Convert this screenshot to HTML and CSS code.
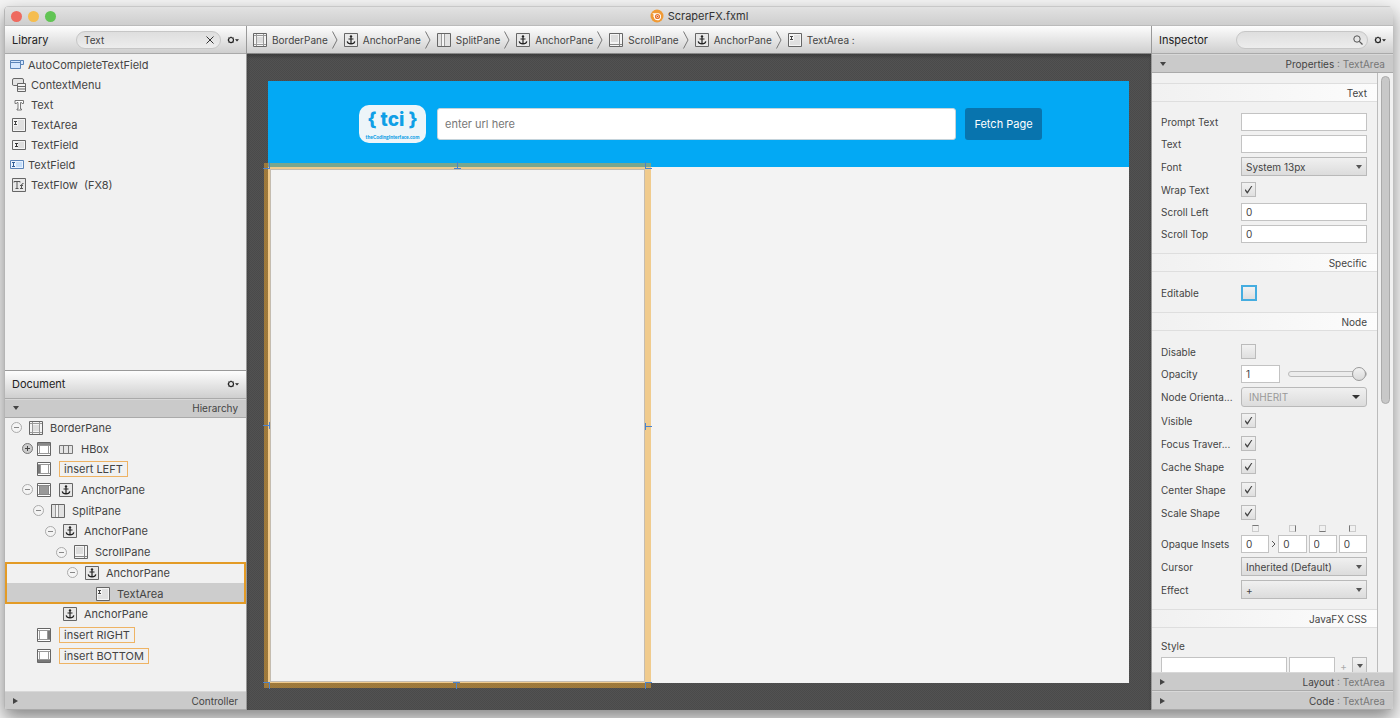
FILE: index.html
```
<!DOCTYPE html>
<html lang="en">

<head>
    <meta charset="UTF-8">
    <meta name="viewport" content="width=device-width, initial-scale=1.0">
    <title>ScraperFX.fxml</title>
    <link rel="stylesheet" href="styles.css">
</head>

<body>
    <!-- Shared icons -->
    <svg class="sprite" aria-hidden="true">
        <symbol id="i-border" viewBox="0 0 14 14">
            <path fill="#f4f4f4" stroke="#666" d="M.5.5h13v13H.5z" />
            <path fill="#ddd" d="M4 4h6v6H4z" />
            <path fill="none" stroke="#999" d="M1 2.5h12M1 11.5h12M3.5 1v12M10.5 1v12" />
        </symbol>
        <symbol id="i-top" viewBox="0 0 14 14">
            <path fill="#fff" stroke="#666" d="M.5.5h13v13H.5z" />
            <path fill="#888" d="M1 1h12v2H1z" />
            <path fill="none" stroke="#999" d="M1 3.5h12M1 11.5h12M2.5 4v7M11.5 4v7" />
        </symbol>
        <symbol id="i-left" viewBox="0 0 14 14">
            <path fill="#fff" stroke="#666" d="M.5.5h13v13H.5z" />
            <path fill="#777" d="M1 3h2v8H1z" />
            <path fill="none" stroke="#999" d="M1 2.5h12M1 11.5h12M3.5 3v8M11.5 3v8" />
        </symbol>
        <symbol id="i-right" viewBox="0 0 14 14">
            <path fill="#fff" stroke="#666" d="M.5.5h13v13H.5z" />
            <path fill="#777" d="M11 3h2v8h-2z" />
            <path fill="none" stroke="#999" d="M1 2.5h12M1 11.5h12M2.5 3v8M10.5 3v8" />
        </symbol>
        <symbol id="i-bottom" viewBox="0 0 14 14">
            <path fill="#fff" stroke="#666" d="M.5.5h13v13H.5z" />
            <path fill="#777" d="M1 11h12v2H1z" />
            <path fill="none" stroke="#999" d="M1 2.5h12M1 10.5h12M2.5 3v8M11.5 3v8" />
        </symbol>
        <symbol id="i-center" viewBox="0 0 14 14">
            <path fill="#fff" stroke="#666" d="M.5.5h13v13H.5z" />
            <path fill="#999" d="M3 3h8v8H3z" />
            <path fill="none" stroke="#888" d="M1 2.5h12M1 11.5h12M2.5 3v8M11.5 3v8" />
        </symbol>
        <symbol id="i-anchor" viewBox="0 0 14 14">
            <path fill="#e8e8e8" stroke="#666" d="M.5.5h13v13H.5z" />
            <path fill="none" stroke="#222" stroke-width="1.2" d="M7 4.500V11M4.500 6h5M3.200 8.300c.3 1.800 1.800 2.500 3.800 2.500s3.500-.7 3.800-2.500" />
            <circle cx="7" cy="3.500" r="1.200" fill="#222" />
        </symbol>
        <symbol id="i-split" viewBox="0 0 14 14">
            <path fill="#e2e2e2" stroke="#666" d="M.5.5h13v13H.5z" />
            <path fill="#f6f6f6" d="M5 1h3v12H5z" />
            <path fill="none" stroke="#999" d="M4.500 1v12M7.500 1v12" />
        </symbol>
        <symbol id="i-scroll" viewBox="0 0 14 14">
            <path fill="#f4f4f4" stroke="#666" d="M.5.5h13v13H.5z" />
            <path fill="#ddd" d="M2 2h7v7H2z" />
            <path fill="none" stroke="#888" d="M10.500 1v12M1 11.500h12" />
        </symbol>
        <symbol id="i-area" viewBox="0 0 14 14">
            <path fill="#f4f4f4" stroke="#666" d="M.5.5h13v13H.5z" />
            <path fill="#e0e0e0" d="M6 2h6v10H2V8h4z" />
            <path fill="none" stroke="#444" d="M2 3.500h3M3.500 3v4M2 6.500h3" />
        </symbol>
        <symbol id="i-field" viewBox="0 0 14 14">
            <path fill="#f4f4f4" stroke="#666" d="M.5 2.500h13v9H.5z" />
            <path fill="#ddd" d="M6 4h6v6H6z" />
            <path fill="none" stroke="#333" d="M3 5.500h3M4.500 5v4M3 8.500h3" />
        </symbol>
        <symbol id="i-field-blue" viewBox="0 0 14 14">
            <path fill="#eaf3ff" stroke="#5b84b8" d="M.5 2.500h13v8H.5z" />
            <path fill="#c5defa" d="M6 4h6v5H6z" />
            <path fill="none" stroke="#2f5e98" d="M2 4.500h3M3.500 4v5M2 8.500h3" />
        </symbol>
        <symbol id="i-custom" viewBox="0 0 14 14">
            <path fill="#d5e7ff" stroke="#5b84b8" d="M10.500 2.500h3v4h-3M.5 2.500h10v8H.5zM.5 4.500h10" />
        </symbol>
        <symbol id="i-hbox" viewBox="0 0 14 14">
            <path fill="#e4e4e4" stroke="#777" d="M.5 3.500h13v8H.5zM4.500 4v7M9.500 4v7" />
        </symbol>
        <symbol id="i-menu" viewBox="0 0 14 14">
            <path fill="#e4e4e4" stroke="#666" d="M2 .5h8q1.500 0 1.500 1.500v5.500h-10Q.5 7.500.5 6V2Q.5.5 2 .5z" />
            <path fill="#f4f4f4" stroke="#666" d="M5.500 5.500h8v8h-8zM5.500 8.500h8M5.500 11h8" />
        </symbol>
        <symbol id="i-text" viewBox="0 0 14 14">
            <path fill="#fff" stroke="#777" d="M3 2.500h8.500v3h-1.500l-.5-1h-1v6.500h1v1H5v-1h1V4.500H5l-.5 1H3z" />
        </symbol>
        <symbol id="i-flow" viewBox="0 0 14 14">
            <path fill="#e8e8e8" stroke="#666" d="M.5.5h13v13H.5z" />
            <path fill="none" stroke="#555" d="M2 4.500V3.500h6v1M5 4v7M3.500 10.500h3M9.500 11V7q0-1.500 2-1.500M8 7.500h3M8 10.500h3" />
        </symbol>
        <symbol id="i-minus" viewBox="0 0 11 11">
            <circle cx="5.500" cy="5.500" r="5" fill="#f4f4f4" stroke="#aaa" />
            <path stroke="#888" d="M3 5.500h5" />
        </symbol>
        <symbol id="i-plus" viewBox="0 0 11 11">
            <circle cx="5.500" cy="5.500" r="5" fill="#ccc" stroke="#777" />
            <path stroke="#444" d="M3 5.500h5M5.500 3v5" />
        </symbol>
        <symbol id="i-gear" viewBox="0 0 12 10">
            <circle cx="4" cy="5" r="2.500" fill="none" stroke="#222" stroke-width="1.200" />
            <path fill="none" stroke="#222" stroke-width=".7" d="M4 1.500v1M4 7.500v1M.5 5h1M1.500 2.500l.8.8M1.500 7.500l.8-.8M6.500 2.500l-.8.8M6.500 7.500l-.8-.8" />
            <path fill="#222" d="M8 4.200h4L10 6.600z" />
        </symbol>
        <symbol id="i-chevron" viewBox="0 0 6 18">
            <path fill="none" stroke="#777" d="M.5.5L5 9 .5 17.500" />
        </symbol>
        <symbol id="i-tee" viewBox="0 0 8 8">
            <path fill="none" stroke="#4a82cc" d="M4.500 0v6M1 6.500h7" />
        </symbol>
        <symbol id="i-corner" viewBox="0 0 8 8">
            <path fill="none" stroke="#4a82cc" d="M0 6.500h7M6.500 0v7" />
        </symbol>
    </svg>

    <div class="window">
        <header class="titlebar">
            <div class="lights">
                <button class="light red" aria-label="Close"></button>
                <button class="light yellow" aria-label="Minimize"></button>
                <button class="light green" aria-label="Zoom"></button>
            </div>
            <svg class="app-icon" viewBox="0 0 14 14">
                <circle cx="7" cy="7" r="6.500" fill="#f09a35" />
                <path fill="#fff" d="M2.200 4.200l6.300.1a3.600 3.600 0 1 1-4.600 4L2.800 6.400l1.600.1z" />
                <circle cx="7.500" cy="7.500" r="2.600" fill="#e8762c" />
                <circle cx="7.500" cy="7.500" r="1.200" fill="#fff" />
                <circle cx="7.500" cy="7.500" r=".8" fill="#d24a1f" />
            </svg>
            <h1>ScraperFX.fxml</h1>
        </header>

        <div class="workspace">
            <!-- Library and document -->
            <aside class="side">
                <section class="library">
                    <div class="toolbar">
                        <h2>Library</h2>
                        <div class="search">
                            <input type="text" value="Text" aria-label="Search library">
                            <button aria-label="Clear">
                                <svg viewBox="0 0 10 10"><path stroke="#333" d="M1.500 1.500l7 7M8.500 1.500l-7 7" /></svg>
                            </button>
                        </div>
                        <button class="gear" aria-label="Library options"><svg><use href="#i-gear" /></svg></button>
                    </div>
                    <ul class="items">
                        <li class="custom"><svg class="icon"><use href="#i-custom" /></svg>AutoCompleteTextField</li>
                        <li><svg class="icon"><use href="#i-menu" /></svg>ContextMenu</li>
                        <li><svg class="icon"><use href="#i-text" /></svg>Text</li>
                        <li><svg class="icon"><use href="#i-area" /></svg>TextArea</li>
                        <li><svg class="icon"><use href="#i-field" /></svg>TextField</li>
                        <li class="custom"><svg class="icon"><use href="#i-field-blue" /></svg>TextField</li>
                        <li><svg class="icon"><use href="#i-flow" /></svg>TextFlow &nbsp;(FX8)</li>
                    </ul>
                </section>

                <section class="document">
                    <div class="toolbar">
                        <h2>Document</h2>
                        <button class="gear" aria-label="Document options"><svg><use href="#i-gear" /></svg></button>
                    </div>
                    <button class="bar open"><span>Hierarchy</span></button>
                    <ul class="tree">
                        <li class="node l0"><svg class="toggle"><use href="#i-minus" /></svg><svg class="icon"><use href="#i-border" /></svg>BorderPane</li>
                        <li class="node l1 slot"><svg class="toggle"><use href="#i-plus" /></svg><svg class="icon"><use href="#i-top" /></svg><svg class="icon"><use href="#i-hbox" /></svg>HBox</li>
                        <li class="node l1 slot"><span class="toggle"></span><svg class="icon"><use href="#i-left" /></svg><span class="insert">insert LEFT</span></li>
                        <li class="node l1 slot"><svg class="toggle"><use href="#i-minus" /></svg><svg class="icon"><use href="#i-center" /></svg><svg class="icon"><use href="#i-anchor" /></svg>AnchorPane</li>
                        <li class="node l2"><svg class="toggle"><use href="#i-minus" /></svg><svg class="icon"><use href="#i-split" /></svg>SplitPane</li>
                        <li class="node l3"><svg class="toggle"><use href="#i-minus" /></svg><svg class="icon"><use href="#i-anchor" /></svg>AnchorPane</li>
                        <li class="node l4"><svg class="toggle"><use href="#i-minus" /></svg><svg class="icon"><use href="#i-scroll" /></svg>ScrollPane</li>
                        <li class="group">
                            <ul>
                                <li class="node l5"><svg class="toggle"><use href="#i-minus" /></svg><svg class="icon"><use href="#i-anchor" /></svg>AnchorPane</li>
                                <li class="node l6 selected"><span class="toggle"></span><svg class="icon"><use href="#i-area" /></svg>TextArea</li>
                            </ul>
                        </li>
                        <li class="node l3"><span class="toggle"></span><svg class="icon"><use href="#i-anchor" /></svg>AnchorPane</li>
                        <li class="node l1 slot"><span class="toggle"></span><svg class="icon"><use href="#i-right" /></svg><span class="insert">insert RIGHT</span></li>
                        <li class="node l1 slot"><span class="toggle"></span><svg class="icon"><use href="#i-bottom" /></svg><span class="insert">insert BOTTOM</span></li>
                    </ul>
                    <button class="bar"><span>Controller</span></button>
                </section>
            </aside>

            <!-- Canvas -->
            <main class="content">
                <nav class="toolbar crumbs">
                    <a href="#"><svg class="icon"><use href="#i-border" /></svg>BorderPane</a>
                    <svg class="chevron"><use href="#i-chevron" /></svg>
                    <a href="#"><svg class="icon"><use href="#i-anchor" /></svg>AnchorPane</a>
                    <svg class="chevron"><use href="#i-chevron" /></svg>
                    <a href="#"><svg class="icon"><use href="#i-split" /></svg>SplitPane</a>
                    <svg class="chevron"><use href="#i-chevron" /></svg>
                    <a href="#"><svg class="icon"><use href="#i-anchor" /></svg>AnchorPane</a>
                    <svg class="chevron"><use href="#i-chevron" /></svg>
                    <a href="#"><svg class="icon"><use href="#i-scroll" /></svg>ScrollPane</a>
                    <svg class="chevron"><use href="#i-chevron" /></svg>
                    <a href="#"><svg class="icon"><use href="#i-anchor" /></svg>AnchorPane</a>
                    <svg class="chevron"><use href="#i-chevron" /></svg>
                    <a href="#"><svg class="icon"><use href="#i-area" /></svg>TextArea :</a>
                </nav>
                <div class="canvas">
                    <div class="stage">
                        <div class="hbox">
                            <div class="logo">
                                <span class="logo-name">{ tci }</span>
                                <span class="logo-url">theCodingInterface.com</span>
                            </div>
                            <input class="url" type="text" placeholder="enter url here" aria-label="URL">
                            <button class="fetch">Fetch Page</button>
                        </div>
                        <div class="split">
                            <div class="pane">
                                <textarea aria-label="Output" readonly></textarea>
                                <div class="selection">
                                    <svg class="mark nw"><use href="#i-corner" /></svg>
                                    <svg class="mark n"><use href="#i-tee" /></svg>
                                    <svg class="mark ne"><use href="#i-corner" /></svg>
                                    <svg class="mark e"><use href="#i-tee" /></svg>
                                    <svg class="mark se"><use href="#i-corner" /></svg>
                                    <svg class="mark s"><use href="#i-tee" /></svg>
                                    <svg class="mark sw"><use href="#i-corner" /></svg>
                                    <svg class="mark w"><use href="#i-tee" /></svg>
                                </div>
                            </div>
                        </div>
                    </div>
                </div>
            </main>

            <!-- Inspector -->
            <aside class="side inspector">
                <div class="toolbar">
                    <h2>Inspector</h2>
                    <div class="search">
                        <input type="text" aria-label="Search inspector">
                        <svg viewBox="0 0 10 10"><circle cx="4" cy="4" r="3.200" fill="none" stroke="#555" /><path stroke="#555" stroke-width="1.200" d="M6.300 6.300L9.500 9.500" /></svg>
                    </div>
                    <button class="gear" aria-label="Inspector options"><svg><use href="#i-gear" /></svg></button>
                </div>
                <button class="bar open"><span>Properties <em>: TextArea</em></span></button>
                <div class="scroller">
                    <form class="properties">
                        <h3>Text</h3>
                        <div class="fields">
                            <div class="row"><label for="prompt">Prompt Text</label><input id="prompt" type="text"></div>
                            <div class="row"><label for="text">Text</label><input id="text" type="text"></div>
                            <div class="row combo"><label for="font">Font</label><div class="select"><select id="font"><option>System 13px</option></select></div></div>
                            <div class="row check"><label for="wrap">Wrap Text</label><input id="wrap" type="checkbox" checked></div>
                            <div class="row"><label for="left">Scroll Left</label><input id="left" type="text" value="0"></div>
                            <div class="row"><label for="top">Scroll Top</label><input id="top" type="text" value="0"></div>
                        </div>

                        <h3>Specific</h3>
                        <div class="fields">
                            <div class="row check"><label for="editable">Editable</label><input id="editable" class="focused" type="checkbox"></div>
                        </div>

                        <h3>Node</h3>
                        <div class="fields">
                            <div class="row check"><label for="disable">Disable</label><input id="disable" type="checkbox"></div>
                            <div class="row"><label for="opacity">Opacity</label><input id="opacity" class="short" type="text" value="1"><input type="range" min="0" max="1" step="0.1" value="1" aria-label="Opacity slider"></div>
                            <div class="row choice"><label for="orientation">Node Orienta...</label><div class="select"><select id="orientation"><option>INHERIT</option></select></div></div>
                            <div class="row check"><label for="visible">Visible</label><input id="visible" type="checkbox" checked></div>
                            <div class="row check"><label for="focus">Focus Traver...</label><input id="focus" type="checkbox" checked></div>
                            <div class="row check"><label for="cache">Cache Shape</label><input id="cache" type="checkbox" checked></div>
                            <div class="row check"><label for="center">Center Shape</label><input id="center" type="checkbox" checked></div>
                            <div class="row check"><label for="scale">Scale Shape</label><input id="scale" type="checkbox" checked></div>
                            <div class="row insets">
                                <label for="inset-top">Opaque Insets</label>
                                <div class="inset"><i class="edge top"></i><input id="inset-top" type="text" value="0"></div>
                                <svg class="link" viewBox="0 0 5 8"><path fill="none" stroke="#555" d="M1 1l3 3-3 3" /></svg>
                                <div class="inset"><i class="edge right"></i><input type="text" value="0" aria-label="Right inset"></div>
                                <div class="inset"><i class="edge bottom"></i><input type="text" value="0" aria-label="Bottom inset"></div>
                                <div class="inset"><i class="edge left"></i><input type="text" value="0" aria-label="Left inset"></div>
                            </div>
                            <div class="row combo"><label for="cursor">Cursor</label><div class="select"><select id="cursor"><option>Inherited (Default)</option></select></div></div>
                            <div class="row combo"><label for="effect">Effect</label><div class="select"><select id="effect"><option>+</option></select></div></div>
                        </div>

                        <h3>JavaFX CSS</h3>
                        <div class="fields">
                            <label class="style-label" for="style">Style</label>
                            <div class="style-row">
                                <input id="style" type="text">
                                <input class="value" type="text" aria-label="Style value">
                                <button type="button" class="add" disabled>+</button>
                                <button type="button" class="more" aria-label="More"></button>
                            </div>
                        </div>
                    </form>
                    <div class="scrollbar"><div class="thumb"></div></div>
                </div>
                <button class="bar"><span>Layout <em>: TextArea</em></span></button>
                <button class="bar"><span>Code <em>: TextArea</em></span></button>
            </aside>
        </div>
    </div>
</body>

</html>
```
FILE: styles.css
```
* {
    box-sizing: border-box;
}

body {
    margin: 0;
    height: 100vh;
    padding: 6px 7px 8px 4px;
    background: #f4f4f4;
    font-family: Inter, "Liberation Sans", sans-serif;
    font-size: 11px;
    color: #444;
    overflow: hidden;
}

h1, h2, h3, ul {
    margin: 0;
    padding: 0;
    font-weight: 400;
    list-style: none;
}

button, input, select, textarea {
    margin: 0;
    font: inherit;
    color: inherit;
    border-radius: 0;
    outline: none;
}

button {
    padding: 0;
    border: 0;
    background: none;
}

.sprite {
    position: absolute;
    width: 0;
    height: 0;
}

.icon {
    width: 14px;
    height: 14px;
    flex: none;
}

/* Window */
.window {
    height: 100%;
    display: flex;
    flex-direction: column;
    border-left: 1px solid #b5b5b5;
    border-radius: 5px 5px 4px 4px;
    overflow: hidden;
    background: #f1f1f1;
    box-shadow: 0 8px 18px rgba(0, 0, 0, 0.45);
}

.titlebar {
    flex: none;
    height: 20px;
    display: flex;
    align-items: center;
    justify-content: center;
    gap: 4px;
    position: relative;
    background: linear-gradient(#e2e2e2, #cecece);
    border-top: 1px solid #c8c8c8;
    border-bottom: 1px solid #bbb;
}

.titlebar h1 {
    font-size: 11px;
    color: #333;
}

.app-icon {
    width: 14px;
    height: 14px;
}

.lights {
    position: absolute;
    left: 6px;
    display: flex;
    gap: 6px;
}

.light {
    width: 11px;
    height: 11px;
    border-radius: 50%;
}

.light.red {
    background: #ee6a5f;
}

.light.yellow {
    background: #f5bd4f;
}

.light.green {
    background: #61c454;
}

.workspace {
    flex: 1;
    min-height: 0;
    display: flex;
}

.side {
    flex: none;
    width: 241px;
    display: flex;
    flex-direction: column;
    min-height: 0;
}

.inspector {
    width: 242px;
    border-left: 1px solid #999;
}

.toolbar {
    flex: none;
    height: 28px;
    display: flex;
    align-items: center;
    padding: 0 7px;
    background: linear-gradient(#fdfdfd, #cfcfcf);
    border-bottom: 1px solid #aaa;
}

.toolbar h2 {
    flex: 1;
    font-size: 11px;
    color: #222;
}

.search {
    display: flex;
    align-items: center;
    width: 145px;
    height: 18px;
    padding: 0 5px 0 7px;
    border: 1px solid #c6c6c6;
    border-radius: 9px;
    background: linear-gradient(#dedede, #ededed);
}

.inspector .search {
    width: 132px;
    padding-right: 4px;
}

.search input {
    flex: 1;
    min-width: 0;
    padding: 0;
    border: 0;
    background: none;
    font-size: 10px;
}

.search svg {
    display: block;
    width: 10px;
    height: 10px;
}

.gear {
    margin-left: 6px;
}

.gear svg {
    display: block;
    width: 12px;
    height: 10px;
}

/* Accordion titles */
.bar {
    flex: none;
    height: 19px;
    display: flex;
    align-items: center;
    justify-content: space-between;
    padding: 0 8px;
    background: #cacaca;
    border-top: 1px solid #d8d8d8;
    border-bottom: 1px solid #aaa;
    font-size: 10px;
}

.bar::before {
    content: "";
    border: 3px solid transparent;
    border-left: 5px solid #444;
    border-right: 0;
}

.bar.open::before {
    border: 3px solid transparent;
    border-top: 4px solid #444;
    border-bottom: 0;
}

.bar em {
    font-style: normal;
    color: #777;
}

/* Library */
.library, .document {
    flex: 344 1 0;
    display: flex;
    flex-direction: column;
    min-height: 0;
}

.document {
    flex-grow: 340;
    border-top: 1px solid #999;
}

.items {
    padding: 1px 7px;
}

.items li {
    display: flex;
    align-items: center;
    gap: 5px;
    height: 20px;
}

.items .custom {
    margin-left: -2px;
    gap: 4px;
}

/* Hierarchy tree */
.tree {
    flex: 1;
    min-height: 0;
    display: flex;
    flex-direction: column;
    padding-bottom: 25px;
}

.node {
    flex: 1;
    display: flex;
    align-items: center;
    gap: 7px;
}

.toggle {
    flex: none;
    width: 11px;
    height: 11px;
}

.slot {
    gap: 8px;
}

.slot .toggle {
    margin-right: -4px;
}

.l0 {
    padding-left: 6px;
}

.l1 {
    padding-left: 17px;
}

.l2 {
    padding-left: 28px;
}

.l3 {
    padding-left: 40px;
}

.l4 {
    padding-left: 51px;
}

.l5 {
    padding-left: 62px;
}

.l6 {
    padding-left: 73px;
}

.group {
    flex: 2;
    outline: 2px solid #e39b26;
    outline-offset: -2px;
}

.group ul {
    height: 100%;
    display: flex;
    flex-direction: column;
}

.selected {
    background: #cdcdcd;
}

.insert {
    padding: 0 4px;
    border: 1px solid #eeb364;
    line-height: 14px;
}

/* Content area */
.content {
    flex: 1;
    min-width: 0;
    display: flex;
    flex-direction: column;
    border-left: 1px solid #999;
}

.crumbs {
    gap: 6px;
    padding: 0 6px;
    font-size: 10px;
    border-color: #888;
}

.crumbs a {
    display: flex;
    align-items: center;
    gap: 5px;
    color: inherit;
    text-decoration: none;
    white-space: nowrap;
}

.chevron {
    width: 6px;
    height: 18px;
    margin-left: -2px;
}

.canvas {
    flex: 1;
    min-height: 0;
    display: flex;
    padding: 27px 22px 27px 21px;
    background: repeating-conic-gradient(#4a4a4a 0 25%, #525252 0 50%) 0 0 / 2px 2px;
    box-shadow: inset 0 3px 3px rgba(0, 0, 0, 0.2);
}

.stage {
    flex: 1;
    min-width: 0;
    display: flex;
    flex-direction: column;
    background: #f3f3f3;
}

.hbox {
    flex: none;
    height: 86px;
    display: flex;
    align-items: center;
    padding: 0 87px 0 91px;
    background: #03a9f4;
}

.logo {
    flex: none;
    display: flex;
    flex-direction: column;
    align-items: center;
    width: 67px;
    height: 38px;
    margin-right: 11px;
    border-radius: 10px;
    background: #edf5f9;
    color: #0f9fe6;
    font-weight: 800;
}

.logo-name {
    font-size: 19px;
    line-height: 30px;
}

.logo-url {
    font-family: Lato, Inter, sans-serif;
    font-size: 5px;
    font-weight: 900;
    line-height: 5px;
}

.url {
    flex: 1;
    min-width: 0;
    height: 32px;
    padding: 0 7px;
    border: 1px solid #c5d3da;
    border-radius: 3px;
    background: #fff;
}

.url::placeholder {
    color: #777;
}

.fetch {
    flex: none;
    width: 77px;
    height: 32px;
    margin-left: 9px;
    border-radius: 3px;
    background: #0874ae;
    color: #fff;
}

.split {
    flex: 1;
    min-height: 0;
    display: flex;
}

.pane {
    position: relative;
    width: 44%;
}

.pane textarea {
    display: block;
    width: 100%;
    height: 100%;
    border: 0;
    background: #f3f3f3;
    resize: none;
}

/* Selection frame with its anchor marks, drawn over the text area */
.selection {
    position: absolute;
    inset: -4px -4px -5px -4px;
    border: 6px solid rgba(238, 164, 40, 0.5);
    box-shadow: inset 0 0 0 1px #c4bcb0;
    pointer-events: none;
}

.mark {
    position: absolute;
    width: 8px;
    height: 8px;
}

.nw, .n, .ne {
    top: -7px;
}

.sw, .s, .se {
    bottom: -7px;
}

.nw, .w, .sw {
    left: -7px;
}

.ne, .e, .se {
    right: -7px;
}

.n, .s {
    left: 50%;
    margin-left: -4px;
}

.e, .w {
    top: 50%;
    margin-top: -4px;
}

.ne {
    transform: rotate(90deg);
}

.e {
    transform: rotate(90deg);
}

.se, .s {
    transform: rotate(180deg);
}

.sw, .w {
    transform: rotate(270deg);
}

/* Inspector */
.scroller {
    flex: 1;
    min-height: 0;
    display: flex;
    overflow: hidden;
}

.properties {
    flex: 1;
    min-width: 0;
    padding-top: 10px;
    font-size: 10px;
}

.properties h3 {
    height: 19px;
    padding: 0 10px;
    border-top: 1px solid #dedede;
    border-bottom: 1px solid #dedede;
    background: linear-gradient(90deg, #f1f1f1, #fcfcfc);
    font-size: 10px;
    line-height: 18px;
    text-align: right;
}

.fields {
    display: flex;
    flex-direction: column;
    gap: 4px;
    padding: 11px 10px 10px 9px;
}

.row {
    display: flex;
    align-items: center;
    height: 18px;
}

.row label {
    flex: none;
    width: 80px;
    white-space: nowrap;
}

.row.combo, .row.check {
    height: 19px;
}

.row.choice {
    height: 20px;
}

.properties input[type="text"] {
    flex: 1;
    min-width: 0;
    height: 18px;
    padding: 0 4px;
    border: 1px solid #c3c3c3;
    background: #fff;
}

.properties input.short {
    flex: none;
    width: 39px;
    margin-right: 8px;
}

.select {
    position: relative;
    flex: 1;
    height: 100%;
}

.select::after, .more::after {
    content: "";
    border: 3px solid transparent;
    border-top: 4px solid #555;
    border-bottom: 0;
}

.select::after {
    position: absolute;
    right: 5px;
    top: 8px;
    pointer-events: none;
}

.select select {
    display: block;
    appearance: none;
    width: 100%;
    height: 100%;
    padding: 0 4px;
    border: 1px solid #b9b9b9;
    background: linear-gradient(#f0f0f0, #dcdcdc);
}

.choice .select select {
    padding: 0 7px;
    border-radius: 3px;
    color: #999;
}

.choice .select::after {
    right: 7px;
    border-width: 4px 4px 0;
    border-top-color: #333;
}

input[type="checkbox"] {
    appearance: none;
    display: grid;
    place-items: center;
    width: 15px;
    height: 15px;
    border: 1px solid #bbb;
    background: linear-gradient(#f2f2f2, #dfdfdf);
}

input[type="checkbox"]:checked::before {
    content: "";
    width: 8px;
    height: 8px;
    background: #444;
    clip-path: polygon(0 55%, 12% 48%, 36% 76%, 88% 0, 100% 4%, 40% 100%, 32% 100%);
}

input.focused {
    width: 16px;
    height: 16px;
    border: 2px solid #45ade0;
}

input[type="range"] {
    appearance: none;
    flex: 1;
    min-width: 0;
    height: 14px;
    background: none;
}

input[type="range"]::-webkit-slider-runnable-track {
    height: 6px;
    border: 1px solid #bbb;
    border-radius: 3px;
    background: #ececec;
}

input[type="range"]::-webkit-slider-thumb {
    appearance: none;
    width: 14px;
    height: 14px;
    margin-top: -5px;
    border: 1px solid #999;
    border-radius: 50%;
    background: linear-gradient(#f2f2f2, #dadada);
}

.row.insets {
    height: 27px;
    align-items: flex-end;
    gap: 2px;
}

.insets label {
    width: 78px;
    line-height: 18px;
}

.inset {
    flex: 1;
    min-width: 0;
    display: flex;
    flex-direction: column;
    align-items: center;
    gap: 3px;
}

.properties .inset input {
    flex: none;
    width: 100%;
}

.edge {
    width: 7px;
    height: 7px;
    border: 1px solid #ccc;
}

.edge.top {
    border-top-color: #777;
}

.edge.right {
    border-right-color: #777;
}

.edge.bottom {
    border-bottom-color: #777;
}

.edge.left {
    border-left-color: #777;
}

.link {
    width: 5px;
    height: 8px;
    margin-bottom: 5px;
}

.style-label {
    line-height: 14px;
}

.style-row {
    display: flex;
    gap: 2px;
    height: 18px;
}

.properties input.value {
    flex: none;
    width: 46px;
}

.add, .more {
    width: 13px;
    color: #aaa;
}

.more {
    display: flex;
    align-items: center;
    justify-content: center;
    width: 15px;
    border: 1px solid #bbb;
    background: linear-gradient(#f2f2f2, #dfdfdf);
}

.scrollbar {
    flex: none;
    width: 16px;
    padding: 3px 4px 0 3px;
    border-left: 1px solid #bbb;
    background: #f1f1f1;
}

.thumb {
    width: 9px;
    height: 55%;
    border: 1px solid #aaa;
    border-radius: 5px;
    background: #c8c8c8;
}
```
